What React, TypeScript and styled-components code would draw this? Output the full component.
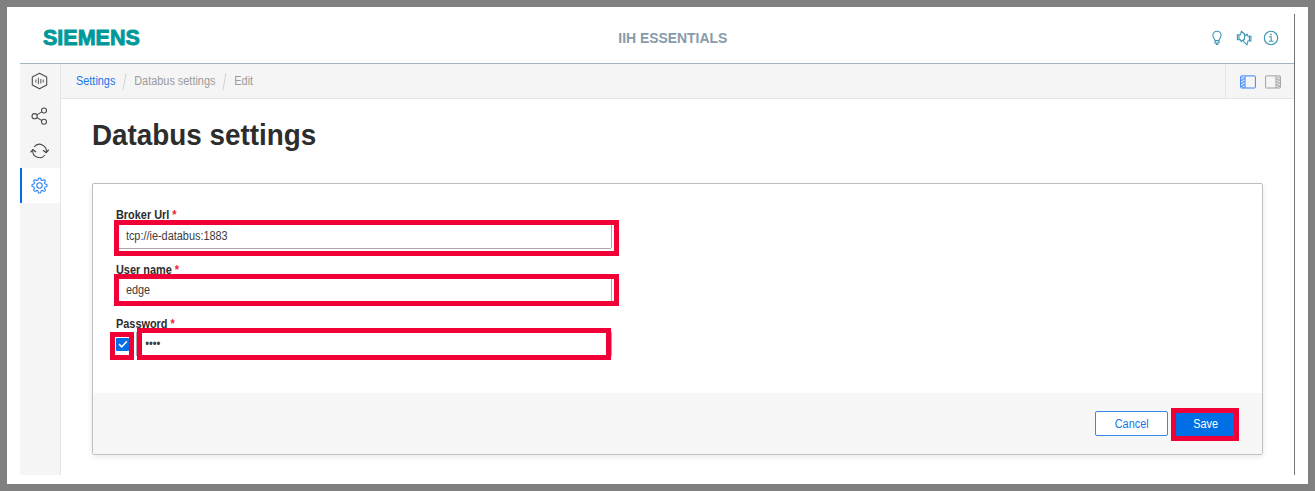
import React from "react";
import styled, { createGlobalStyle, css } from "styled-components";

const BLUE = "#006fe6";
const MARK = "#f00037";

const Global = createGlobalStyle`
  * { box-sizing: border-box; }
  body { margin: 0; font-family: "Liberation Sans", Arial, sans-serif; font-size: 12px; color: #2d2d2d; }
  svg { display: block; }
`;

const Frame = styled.div`
  width: 100%;
  height: 491px;
  border: 7px solid #808080;
  background: #fff;
  padding: 7px 13px 9px;
`;

const Shell = styled.div`
  display: flex;
  flex-direction: column;
  height: 461px;
  border-right: 1px solid #747474;
`;

const Header = styled.header`
  display: grid;
  grid-template-columns: 1fr auto 1fr;
  align-items: center;
  height: 50px;
  padding: 0 15px 2px 22px;
  border-bottom: 1px solid #a3b4be;
`;

const Logo = styled.div`
  color: #009999;
  font-size: 21.5px;
  line-height: 28px;
  padding: 1px 0 0 1px;
  font-weight: bold;
  -webkit-text-stroke: 0.9px #009999;
`;

const Title = styled.div`
  font-size: 14.5px;
  font-weight: bold;
  color: #879baa;
  margin: 0 -8px 0 16px;
  transform: scaleX(0.96);
`;

const HeaderIcons = styled.div`
  display: flex;
  justify-content: flex-end;
  align-items: center;
  gap: 11px;
  color: #3b96b1;
`;

const Body = styled.div`
  display: flex;
  flex: 1;
  min-height: 0;
`;

const Sidebar = styled.nav`
  width: 41px;
  background: #f5f5f5;
  border-right: 1px solid #e6e6e6;
`;

const NavItem = styled.div<{ $active?: boolean }>`
  display: flex;
  align-items: center;
  justify-content: center;
  height: 35px;
  color: #4c4c4c;
  padding: 0 3px 0 0;
  border-left: 2px solid transparent;
  &:first-child { height: 34px; padding-bottom: 1px; }
  ${(p) =>
    p.$active &&
    css`
      color: #2b83f2;
      background: #fff;
      border-left-color: ${BLUE};
    `}
`;

const Main = styled.main`
  flex: 1;
  min-width: 0;
`;

const TopBar = styled.div`
  display: flex;
  justify-content: space-between;
  height: 35px;
  background: #f5f5f5;
  border-bottom: 1px solid #e6e6e6;
`;

const Crumbs = styled.div`
  display: flex;
  align-items: center;
  margin-left: 15px;
  transform: scaleX(0.908);
  transform-origin: left;
`;

const Crumb = styled.span<{ $link?: boolean }>`
  color: ${(p) => (p.$link ? "#1577ea" : "#9b9b9b")};
`;

const Slash = styled.span`
  width: 1px;
  height: 17px;
  margin: 0 10px 0 9.8px;
  background: #cfcfcf;
  transform: skewX(-11deg);
`;

const PanelTools = styled.div`
  display: flex;
  align-items: center;
  gap: 9px;
  width: 69px;
  padding: 1px 0 0 14px;
  border-left: 1px solid #e6e6e6;
`;

const Heading = styled.h1`
  margin: 0 0 0 31px;
  padding-top: 19px;
  font-size: 29px;
  line-height: 34px;
  height: 84px;
  transform: scaleX(0.96);
  transform-origin: left;
`;

const Card = styled.section`
  display: flex;
  flex-direction: column;
  height: 272px;
  margin: 0 31px;
  border: 1px solid #c0c0c0;
  border-radius: 2px;
  box-shadow: 0 2px 6px rgba(0, 0, 0, 0.09);
`;

const Form = styled.div`
  flex: 1;
  padding: 25px 0 0 23px;
`;

const Label = styled.label`
  display: block;
  height: 14px;
  line-height: 13px;
  font-weight: bold;
  transform: scaleX(0.908);
  transform-origin: left;
  & > span { color: #f02040; }
`;

const Control = styled.div`
  display: flex;
  align-items: center;
  position: relative;
`;

const InputBox = styled.div`
  flex: 1;
  min-width: 0;
  height: 26px;
  border: 1px solid #a8a8a8;
  border-radius: 2px;
  background: #fff;
`;

const Input = styled.input`
  display: block;
  width: 100%;
  height: 24px;
  padding: 0 0 1px 9.8px;
  border: 0;
  outline: 0;
  background: transparent;
  font: inherit;
  color: #3c3c3c;
  transform: scaleX(0.908);
  transform-origin: left;
  &[type="password"] { padding-left: 9px; }
`;

const Field = styled.div`
  width: 496px;
  height: 54px;
  & + & ${Label} { padding-top: 1px; }
  & + & ${Input} { padding-bottom: 0; }
`;

const Check = styled.span`
  display: flex;
  align-items: center;
  justify-content: center;
  width: 13px;
  height: 13px;
  margin-right: 7px;
  border-radius: 1px;
  background: ${BLUE};
`;

const Mark = styled.span<{ $l: number; $t: number; $w: number; $h: number }>`
  position: absolute;
  left: ${(p) => p.$l}px;
  top: ${(p) => p.$t}px;
  width: ${(p) => p.$w}px;
  height: ${(p) => p.$h}px;
  border: 5px solid ${MARK};
  pointer-events: none;
`;

const Footer = styled.footer`
  display: flex;
  justify-content: flex-end;
  align-items: center;
  gap: 7px;
  height: 61px;
  padding: 0 27px 0 0;
  background: #f7f7f7;
`;

const Button = styled.button<{ $primary?: boolean }>`
  position: relative;
  height: 25px;
  width: ${(p) => (p.$primary ? 60 : 73)}px;
  padding: 0 0 0 1px;
  font: inherit;
  border: 1px solid ${(p) => (p.$primary ? BLUE : "#3389ea")};
  border-radius: 2px;
  background: ${(p) => (p.$primary ? BLUE : "#fff")};
  color: ${(p) => (p.$primary ? "#fff" : "#1577ea")};
`;

const ButtonText = styled.span`
  display: inline-block;
  transform: scaleX(0.908);
`;

const line = { fill: "none", stroke: "currentColor", strokeWidth: 1.1 } as const;

const Bulb = () => (
  <svg width="16" height="16" viewBox="0 0 16 16" {...line}>
    <path d="M6 10.6C6 9 3.9 7.8 3.9 5.3a4.1 4.1 0 0 1 8.2 0C12.1 7.8 10 9 10 10.6z M6 10.6v2.4h4v-2.4 M6.8 14.4h2.4" />
  </svg>
);

const Plugins = () => (
  <svg width="16" height="16" viewBox="0 0 16 16" {...line}>
    <path d="M4.5 4.8 5.4 1.2 8.5 4.1V9L5.2 11.5 4.5 9.7H1.4V4.8z M3 4.8v4.9" />
    <path d="M8.5 6 11 4.2l1 2.1h2.9V11H12l-1.1 3.7-3.2-2.9V9 M13.4 6.3V11" />
  </svg>
);

const Info = () => (
  <svg width="16" height="16" viewBox="0 0 16 16" {...line}>
    <circle cx="8" cy="8" r="6.7" />
    <path d="M6 6.8h2.2v4.5 M5.8 11.3h4.8" />
    <path d="M7.3 4.5h1.5" strokeWidth="1.5" />
  </svg>
);

const HexBars = () => (
  <svg width="17" height="18" viewBox="0 0 17 18" {...line}>
    <path d="M8.5 1.2 15.7 5v8L8.5 16.8 1.3 13V5z" strokeLinejoin="round" />
    <path d="M4.9 7.5v3 M7.4 5.8v6.4 M9.8 7v4.4 M12.2 7.5v3" strokeWidth=".9" />
  </svg>
);

const Share = () => (
  <svg width="17" height="18" viewBox="0 0 17 18" {...line}>
    <circle cx="3.6" cy="9.2" r="2.6" />
    <circle cx="13" cy="3.5" r="2.5" />
    <circle cx="13" cy="14.8" r="2.5" />
    <path d="M5.9 7.9l4.9-3 M5.9 10.6l4.9 2.9" />
  </svg>
);

const Sync = () => (
  <svg width="19" height="18" viewBox="0.5 0 19 18" {...line}>
    <path d="M4.6 5A6.8 6.8 0 0 1 16.7 10.4 M15.4 13A6.8 6.8 0 0 1 3.3 7.8" />
    <path d="M.9 10.4 3.4 7.7l3.1 2.4 M13.5 8.3l3.1 2.3 2.6-2.8" strokeWidth="1.3" />
  </svg>
);

const gearPath = () => {
  const steps = 96;
  const points: string[] = [];
  for (let i = 0; i < steps; i++) {
    const a = (i / steps) * Math.PI * 2;
    const wave = Math.max(-1, Math.min(1, Math.cos(8 * a) * 1.6));
    const r = 6.6 + wave * 0.95;
    points.push(`${9 + r * Math.sin(a)},${9 - r * Math.cos(a)}`);
  }
  return points.join(" ");
};

const Gear = () => (
  <svg width="17" height="18" viewBox="0.5 0.5 17 18" {...line}>
    <polygon points={gearPath()} strokeLinejoin="round" />
    <circle cx="9" cy="9" r="2.7" />
  </svg>
);

const PanelIcon = ({ right = false }: { right?: boolean }) => (
  <svg width="16" height="14" viewBox="0 0 16 14" fill="none" stroke={right ? "#a39f9a" : "#3c86f5"}>
    <rect x=".6" y=".9" width="14.8" height="12.1" rx=".8" />
    <g transform={right ? "translate(16 0) scale(-1 1)" : undefined}>
      <path d="M5 1v12" />
      <path d="M1 2l3.7 1.8L1 5.1l3.7 1.7L1 8.1l3.7 1.8L1 11.1l3.7 1.6" strokeWidth=".8" />
    </g>
  </svg>
);

const Tick = () => (
  <svg width="12" height="12" viewBox="0 0 12 12" fill="none" stroke="#fff" strokeWidth="1.5">
    <path d="M2 6.1l2.7 2.7 5.2-5.6" />
  </svg>
);

export default function App() {
  return (
    <Frame>
      <Global />
      <Shell>
        <Header>
          <Logo>SIEMENS</Logo>
          <Title>IIH ESSENTIALS</Title>
          <HeaderIcons>
            <Bulb />
            <Plugins />
            <Info />
          </HeaderIcons>
        </Header>
        <Body>
          <Sidebar>
            <NavItem><HexBars /></NavItem>
            <NavItem><Share /></NavItem>
            <NavItem><Sync /></NavItem>
            <NavItem $active><Gear /></NavItem>
          </Sidebar>
          <Main>
            <TopBar>
              <Crumbs>
                <Crumb $link>Settings</Crumb>
                <Slash />
                <Crumb>Databus settings</Crumb>
                <Slash />
                <Crumb>Edit</Crumb>
              </Crumbs>
              <PanelTools>
                <PanelIcon />
                <PanelIcon right />
              </PanelTools>
            </TopBar>
            <Heading>Databus settings</Heading>
            <Card>
              <Form>
                <Field>
                  <Label>Broker Url <span>*</span></Label>
                  <Control>
                    <InputBox><Input defaultValue="tcp://ie-databus:1883" /></InputBox>
                    <Mark $l={-2} $t={-3} $w={505} $h={36} />
                  </Control>
                </Field>
                <Field>
                  <Label>User name <span>*</span></Label>
                  <Control>
                    <InputBox><Input defaultValue="edge" /></InputBox>
                    <Mark $l={-2} $t={-3} $w={505} $h={32} />
                  </Control>
                </Field>
                <Field>
                  <Label>Password <span>*</span></Label>
                  <Control>
                    <Check><Tick /></Check>
                    <InputBox><Input type="password" defaultValue="edge" /></InputBox>
                    <Mark $l={-6} $t={1} $w={24} $h={28} />
                    <Mark $l={21} $t={-3} $w={474} $h={32} />
                  </Control>
                </Field>
              </Form>
              <Footer>
                <Button><ButtonText>Cancel</ButtonText></Button>
                <Button $primary>
                  <ButtonText>Save</ButtonText>
                  <Mark $l={-5} $t={-4} $w={68} $h={33} />
                </Button>
              </Footer>
            </Card>
          </Main>
        </Body>
      </Shell>
    </Frame>
  );
}
